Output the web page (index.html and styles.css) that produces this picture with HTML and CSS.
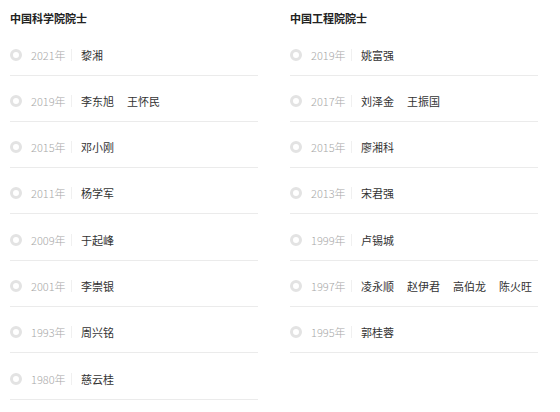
FILE: index.html
```html
<!DOCTYPE html>
<html lang="zh-CN">
<head>
<meta charset="utf-8">
<title>院士</title>
<link rel="stylesheet" href="styles.css">
</head>
<body>
<div class="page">
  <section class="col">
    <h2 class="title">中国科学院院士</h2>
    <ul class="list">
      <li class="row"><span class="dot"></span><span class="year">2021年</span><span class="sep"></span><span class="names"><span>黎湘</span></span></li>
      <li class="row"><span class="dot"></span><span class="year">2019年</span><span class="sep"></span><span class="names"><span>李东旭</span><span>王怀民</span></span></li>
      <li class="row"><span class="dot"></span><span class="year">2015年</span><span class="sep"></span><span class="names"><span>邓小刚</span></span></li>
      <li class="row"><span class="dot"></span><span class="year">2011年</span><span class="sep"></span><span class="names"><span>杨学军</span></span></li>
      <li class="row"><span class="dot"></span><span class="year">2009年</span><span class="sep"></span><span class="names"><span>于起峰</span></span></li>
      <li class="row"><span class="dot"></span><span class="year">2001年</span><span class="sep"></span><span class="names"><span>李崇银</span></span></li>
      <li class="row"><span class="dot"></span><span class="year">1993年</span><span class="sep"></span><span class="names"><span>周兴铭</span></span></li>
      <li class="row"><span class="dot"></span><span class="year">1980年</span><span class="sep"></span><span class="names"><span>慈云桂</span></span></li>
    </ul>
  </section>
  <section class="col">
    <h2 class="title">中国工程院院士</h2>
    <ul class="list">
      <li class="row"><span class="dot"></span><span class="year">2019年</span><span class="sep"></span><span class="names"><span>姚富强</span></span></li>
      <li class="row"><span class="dot"></span><span class="year">2017年</span><span class="sep"></span><span class="names"><span>刘泽金</span><span>王振国</span></span></li>
      <li class="row"><span class="dot"></span><span class="year">2015年</span><span class="sep"></span><span class="names"><span>廖湘科</span></span></li>
      <li class="row"><span class="dot"></span><span class="year">2013年</span><span class="sep"></span><span class="names"><span>宋君强</span></span></li>
      <li class="row"><span class="dot"></span><span class="year">1999年</span><span class="sep"></span><span class="names"><span>卢锡城</span></span></li>
      <li class="row"><span class="dot"></span><span class="year">1997年</span><span class="sep"></span><span class="names"><span>凌永顺</span><span>赵伊君</span><span>高伯龙</span><span>陈火旺</span></span></li>
      <li class="row"><span class="dot"></span><span class="year">1995年</span><span class="sep"></span><span class="names"><span>郭桂蓉</span></span></li>
    </ul>
  </section>
</div>
</body>
</html>
```

FILE: styles.css
```css
html, body {
  margin: 0;
  padding: 0;
  background: #ffffff;
}

body {
  font-family: "Noto Sans CJK SC", "Noto Sans", sans-serif;
  color: #333333;
}

.page {
  display: grid;
  grid-template-columns: 248px 248px;
  column-gap: 32px;
  padding: 10px 0 0 10px;
}

.title {
  margin: 0 0 7.5px 0;
  font-size: 11px;
  line-height: 17px;
  font-weight: 700;
  color: #222222;
}

.list {
  list-style: none;
  margin: 0;
  padding: 0;
}

.row {
  display: flex;
  align-items: center;
  height: 40px;
  margin-top: 5.33px;
  border-bottom: 1px solid #ebebeb;
}

.dot {
  box-sizing: border-box;
  width: 12px;
  height: 12px;
  margin-left: 0;
  border: 3px solid #e3e3e3;
  border-radius: 50%;
  flex: none;
}

.year {
  margin-left: 9px;
  font-size: 11px;
  font-weight: 300;
  color: #a8a8a8;
  width: 34px;
  white-space: nowrap;
}

.sep {
  width: 1px;
  height: 12px;
  background: #f0f0f0;
  margin-left: 6px;
  margin-right: 9px;
  flex: none;
}

.names {
  display: flex;
  gap: 13px;
  font-size: 11px;
  color: #333333;
}
```
